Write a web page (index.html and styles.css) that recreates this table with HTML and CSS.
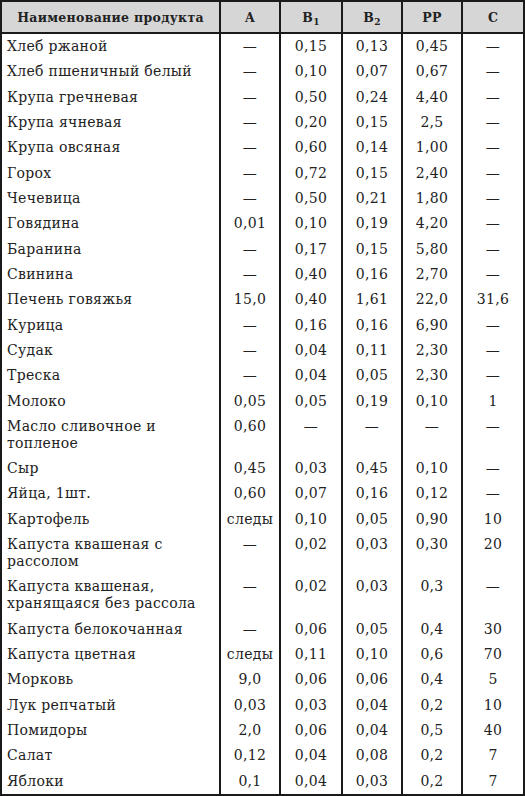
FILE: index.html
```html
<!DOCTYPE html>
<html lang="ru">
<head>
<meta charset="utf-8">
<link rel="stylesheet" href="styles.css">
</head>
<body>
<table class="vt">
<colgroup>
<col class="c-name"><col class="c-num"><col class="c-num2"><col class="c-num"><col class="c-num"><col class="c-num2">
</colgroup>
<thead>
<tr><th class="name">Наименование продукта</th><th>A</th><th>B<sub>1</sub></th><th>B<sub>2</sub></th><th>PP</th><th>C</th></tr>
</thead>
<tbody>
<tr><td class="name">Хлеб ржаной</td><td>—</td><td>0,15</td><td>0,13</td><td>0,45</td><td>—</td></tr>
<tr><td class="name">Хлеб пшеничный белый</td><td>—</td><td>0,10</td><td>0,07</td><td>0,67</td><td>—</td></tr>
<tr><td class="name">Крупа гречневая</td><td>—</td><td>0,50</td><td>0,24</td><td>4,40</td><td>—</td></tr>
<tr><td class="name">Крупа ячневая</td><td>—</td><td>0,20</td><td>0,15</td><td>2,5</td><td>—</td></tr>
<tr><td class="name">Крупа овсяная</td><td>—</td><td>0,60</td><td>0,14</td><td>1,00</td><td>—</td></tr>
<tr><td class="name">Горох</td><td>—</td><td>0,72</td><td>0,15</td><td>2,40</td><td>—</td></tr>
<tr><td class="name">Чечевица</td><td>—</td><td>0,50</td><td>0,21</td><td>1,80</td><td>—</td></tr>
<tr><td class="name">Говядина</td><td>0,01</td><td>0,10</td><td>0,19</td><td>4,20</td><td>—</td></tr>
<tr><td class="name">Баранина</td><td>—</td><td>0,17</td><td>0,15</td><td>5,80</td><td>—</td></tr>
<tr><td class="name">Свинина</td><td>—</td><td>0,40</td><td>0,16</td><td>2,70</td><td>—</td></tr>
<tr><td class="name">Печень говяжья</td><td>15,0</td><td>0,40</td><td>1,61</td><td>22,0</td><td>31,6</td></tr>
<tr><td class="name">Курица</td><td>—</td><td>0,16</td><td>0,16</td><td>6,90</td><td>—</td></tr>
<tr><td class="name">Судак</td><td>—</td><td>0,04</td><td>0,11</td><td>2,30</td><td>—</td></tr>
<tr><td class="name">Треска</td><td>—</td><td>0,04</td><td>0,05</td><td>2,30</td><td>—</td></tr>
<tr><td class="name">Молоко</td><td>0,05</td><td>0,05</td><td>0,19</td><td>0,10</td><td>1</td></tr>
<tr><td class="name">Масло сливочное и<br>топленое</td><td>0,60</td><td>—</td><td>—</td><td>—</td><td>—</td></tr>
<tr><td class="name">Сыр</td><td>0,45</td><td>0,03</td><td>0,45</td><td>0,10</td><td>—</td></tr>
<tr><td class="name">Яйца, 1шт.</td><td>0,60</td><td>0,07</td><td>0,16</td><td>0,12</td><td>—</td></tr>
<tr><td class="name">Картофель</td><td>следы</td><td>0,10</td><td>0,05</td><td>0,90</td><td>10</td></tr>
<tr><td class="name">Капуста квашеная с<br>рассолом</td><td>—</td><td>0,02</td><td>0,03</td><td>0,30</td><td>20</td></tr>
<tr><td class="name">Капуста квашеная,<br>хранящаяся без рассола</td><td>—</td><td>0,02</td><td>0,03</td><td>0,3</td><td>—</td></tr>
<tr><td class="name">Капуста белокочанная</td><td>—</td><td>0,06</td><td>0,05</td><td>0,4</td><td>30</td></tr>
<tr><td class="name">Капуста цветная</td><td>следы</td><td>0,11</td><td>0,10</td><td>0,6</td><td>70</td></tr>
<tr><td class="name">Морковь</td><td>9,0</td><td>0,06</td><td>0,06</td><td>0,4</td><td>5</td></tr>
<tr><td class="name">Лук репчатый</td><td>0,03</td><td>0,03</td><td>0,04</td><td>0,2</td><td>10</td></tr>
<tr><td class="name">Помидоры</td><td>2,0</td><td>0,06</td><td>0,04</td><td>0,5</td><td>40</td></tr>
<tr><td class="name">Салат</td><td>0,12</td><td>0,04</td><td>0,08</td><td>0,2</td><td>7</td></tr>
<tr><td class="name">Яблоки</td><td>0,1</td><td>0,04</td><td>0,03</td><td>0,2</td><td>7</td></tr>
</tbody>
</table>
</body>
</html>
```
FILE: styles.css
```css
html, body {
  margin: 0;
  padding: 0;
  background: #fff;
}
.vt {
  border-collapse: collapse;
  table-layout: fixed;
  width: 524px;
  font-family: "DejaVu Serif", serif;
  font-size: 14px;
  letter-spacing: 0.3px;
  color: #222;
  border: 2px solid #1a1a1a;
}
.c-name { width: 219px; }
.c-num { width: 60px; }
.c-num2 { width: 62px; }
.vt th {
  background: #d6d6d6;
  font-size: 12.5px;
  font-weight: bold;
  height: 30px;
  padding: 0;
  text-align: center;
  border-left: 2px solid #1a1a1a;
  border-bottom: 2px solid #1a1a1a;
  line-height: 17px;
}
.vt th sub {
  font-size: 9px;
  vertical-align: -3px;
  line-height: 0;
}
.vt td {
  padding: 4.17px 4px;
  line-height: 17px;
  text-align: center;
  vertical-align: top;
  border-left: 2px solid #1a1a1a;
}
.vt td.name {
  text-align: left;
  padding-left: 5px;
}
```
